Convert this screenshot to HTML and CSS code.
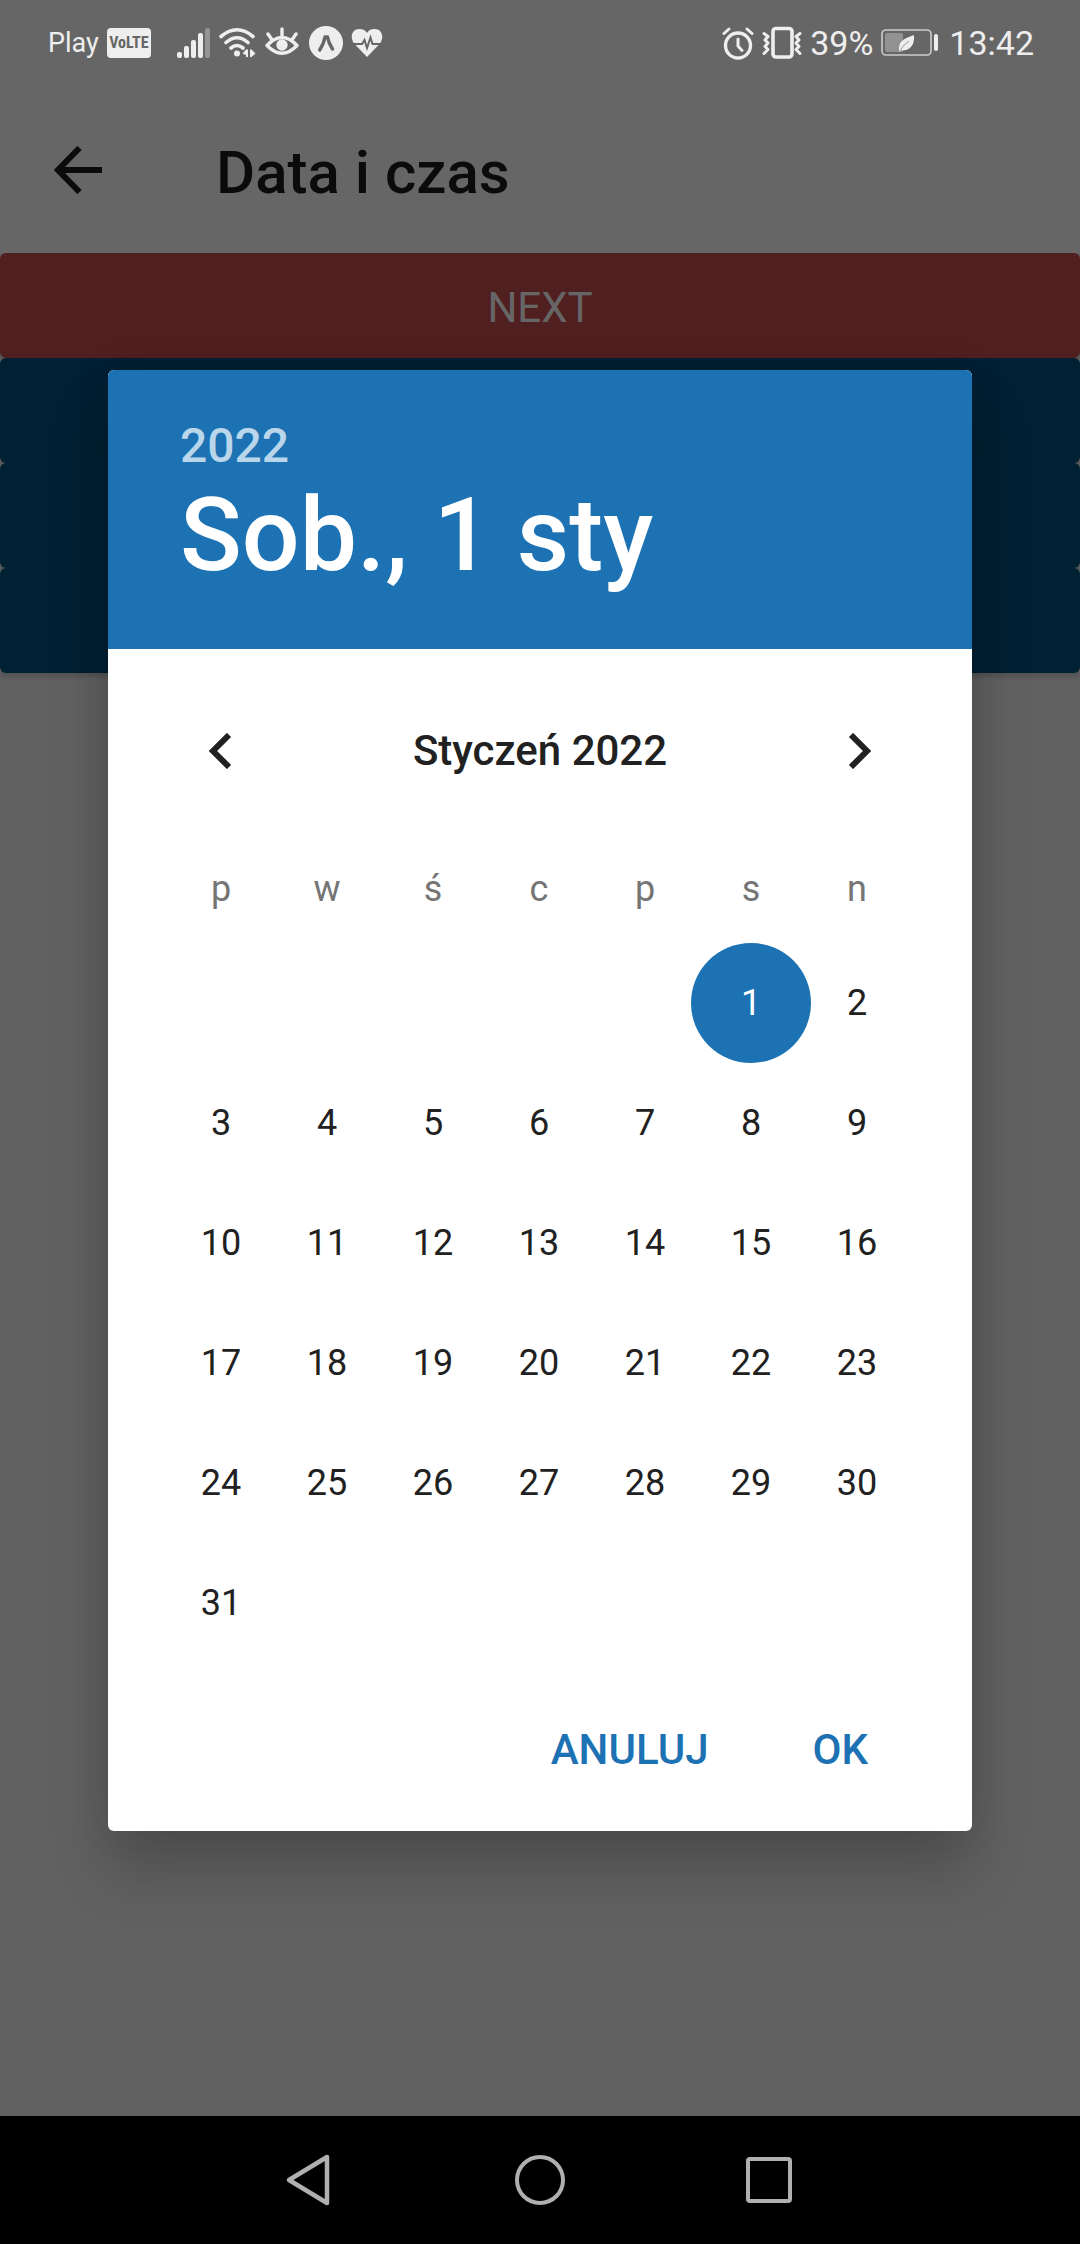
FILE: index.html
```html
<!DOCTYPE html>
<html lang="pl">
<head>
<meta charset="utf-8">
<meta name="viewport" content="width=device-width, initial-scale=1">
<title>Data i czas</title>
<link rel="stylesheet" href="styles.css">
</head>
<body>
<div class="screen">
  <div class="status-bar">
    <div class="status-group">
      <span class="carrier">Play</span>
      <span class="volte">VoLTE</span>
      <svg class="signal" width="34" height="32" viewBox="0 0 34 32" fill="#eee">
        <rect x="0" y="25" width="5" height="6" rx="2"/><rect x="7" y="19" width="5" height="12" rx="2"/><rect x="14" y="13" width="5" height="18" rx="2"/><rect x="21" y="6" width="5" height="25" rx="2"/><rect x="28" y="1" width="5" height="30" rx="2" opacity=".35"/>
      </svg>
      <svg width="38" height="34" viewBox="0 0 38 34" fill="none" stroke="#eee" stroke-width="3.600" stroke-linecap="round">
        <path d="M2 10.500Q18 -3 34 10.500M7 16.500Q18 7 29 16.500M12 22Q18 17 24 22"/>
        <circle cx="18" cy="27.500" r="3" fill="#eee" stroke="none"/>
        <path d="M29 23.500V31H27V29L23.500 27.800L27 23.500ZM31 23.500H32.500L36.500 27.500L32.500 31H31Z" fill="#eee" stroke="none"/>
      </svg>
      <svg width="34" height="34" viewBox="0 0 34 34" fill="none" stroke="#eee" stroke-width="3.400" stroke-linecap="round" stroke-linejoin="round">
        <path d="M2 19.500Q17 3.500 32 19.500Q17 35 2 19.500ZM17 10V3M6.500 13L3 8M27.500 13L31 8"/>
        <circle cx="17" cy="19" r="5.700" fill="#eee" stroke="none"/>
      </svg>
      <svg class="expo" width="34" height="34" viewBox="0 0 34 34">
        <circle cx="17" cy="17" r="17" fill="#eee"/>
        <path d="M10.700 24Q15 17 16 11H18.500Q19.500 17 23.500 23" fill="none" stroke="#666" stroke-width="3.400" stroke-linecap="round" stroke-linejoin="round"/>
      </svg>
      <svg width="32" height="30" viewBox="0 0 32 30">
        <path d="M16 29L3 15.500C-1.500 9 1 1 8.500 1C12 1 14.500 2.500 16 5C17.500 2.500 20 1 23.500 1C31 1 33.500 9 29 15.500Z" fill="#eee"/>
        <path d="M1 16H11L13.500 12L16 20L19.500 9.500L21.500 16H31" fill="none" stroke="#666" stroke-width="2"/>
      </svg>
    </div>
    <div class="status-group">
      <svg width="32" height="34" viewBox="0 0 32 34" fill="none" stroke="#eee" stroke-width="3.400" stroke-linecap="round" stroke-linejoin="round">
        <circle cx="16" cy="19.500" r="12.500"/><path d="M16 13V20L20 24.500M2 7.500L7 3M30 7.500L25 3" stroke-width="3"/>
      </svg>
      <svg width="40" height="34" viewBox="0 0 40 34" fill="none" stroke="#eee" stroke-width="3" stroke-linejoin="round" stroke-linecap="round">
        <rect x="11" y="2.500" width="19" height="28.500" rx="3" stroke-width="3.600"/>
        <path d="M2 7.500L6 10.500L3 14L6 17L3 20.500L6 23.500L2 27.500M38 7.500L34 10.500L37 14L34 17L37 20.500L34 23.500L38 27.500"/>
      </svg>
      <span class="status-text">39%</span>
      <svg width="58" height="30" viewBox="0 0 58 30">
        <rect x="1" y="2" width="49" height="25" rx="4" fill="none" stroke="#ccc" stroke-width="1.600"/>
        <rect x="4" y="5" width="18" height="19" rx="2" fill="#929292"/>
        <rect x="53" y="6" width="4" height="17" rx="2" fill="#eee"/>
        <path d="M18 24C17 13 22 11 33 7C34 17 29 23 20 22.500Z" fill="#eee"/><path d="M18.500 23Q23 16 28 13" stroke="#999" fill="none"/>
      </svg>
      <span class="status-text clock">13:42</span>
    </div>
  </div>

  <header class="app-bar">
    <button class="back" type="button" aria-label="Wstecz">
      <svg width="48" height="48" viewBox="0 0 48 48" fill="none" stroke="#1c1c1e" stroke-width="6"><path d="M48 24H6M25.500 2L4 24L25.500 46"/></svg>
    </button>
    <h1 class="title">Data i czas</h1>
  </header>

  <main class="content">
    <button class="bar bar-next" type="button">NEXT</button>
    <button class="bar" type="button" aria-label="Data"></button>
    <button class="bar" type="button" aria-label="Czas"></button>
    <button class="bar" type="button" aria-label="Data i czas"></button>
  </main>

  <div class="scrim">
    <section class="dialog" role="dialog" aria-modal="true" aria-label="Wybierz datę">
      <header class="dialog-head">
        <button class="year" type="button">2022</button>
        <h2 class="date">Sob., 1 sty</h2>
      </header>
      <div class="month">
        <button class="step" type="button" aria-label="Poprzedni miesiąc"><svg width="24" height="36" viewBox="0 0 24 36" fill="none" stroke="#212121" stroke-width="6"><path d="M20 2L4 18L20 34"/></svg></button>
        <h3 class="month-name">Styczeń 2022</h3>
        <button class="step" type="button" aria-label="Następny miesiąc"><svg width="24" height="36" viewBox="0 0 24 36" fill="none" stroke="#212121" stroke-width="6"><path d="M4 2L20 18L4 34"/></svg></button>
      </div>
      <table class="calendar">
        <thead><tr><th>p</th><th>w</th><th>ś</th><th>c</th><th>p</th><th>s</th><th>n</th></tr></thead>
        <tbody>
          <tr><td></td><td></td><td></td><td></td><td></td><td><button class="day selected" type="button" aria-pressed="true">1</button></td><td><button class="day" type="button">2</button></td></tr>
          <tr><td><button class="day" type="button">3</button></td><td><button class="day" type="button">4</button></td><td><button class="day" type="button">5</button></td><td><button class="day" type="button">6</button></td><td><button class="day" type="button">7</button></td><td><button class="day" type="button">8</button></td><td><button class="day" type="button">9</button></td></tr>
          <tr><td><button class="day" type="button">10</button></td><td><button class="day" type="button">11</button></td><td><button class="day" type="button">12</button></td><td><button class="day" type="button">13</button></td><td><button class="day" type="button">14</button></td><td><button class="day" type="button">15</button></td><td><button class="day" type="button">16</button></td></tr>
          <tr><td><button class="day" type="button">17</button></td><td><button class="day" type="button">18</button></td><td><button class="day" type="button">19</button></td><td><button class="day" type="button">20</button></td><td><button class="day" type="button">21</button></td><td><button class="day" type="button">22</button></td><td><button class="day" type="button">23</button></td></tr>
          <tr><td><button class="day" type="button">24</button></td><td><button class="day" type="button">25</button></td><td><button class="day" type="button">26</button></td><td><button class="day" type="button">27</button></td><td><button class="day" type="button">28</button></td><td><button class="day" type="button">29</button></td><td><button class="day" type="button">30</button></td></tr>
          <tr><td><button class="day" type="button">31</button></td><td></td><td></td><td></td><td></td><td></td><td></td></tr>
        </tbody>
      </table>
      <div class="actions">
        <button class="action" type="button">ANULUJ</button>
        <button class="action" type="button">OK</button>
      </div>
    </section>
  </div>

  <nav class="nav-bar">
    <button class="nav-key" type="button" aria-label="Wstecz"><svg width="52" height="60" viewBox="0 0 52 60" fill="none" stroke="#b0b0b0" stroke-width="4.500" stroke-linejoin="round"><path d="M42 7V53L4 30Z"/></svg></button>
    <button class="nav-key" type="button" aria-label="Ekran główny"><svg width="52" height="52" viewBox="0 0 52 52" fill="none" stroke="#b0b0b0" stroke-width="4"><circle cx="26" cy="26" r="23"/></svg></button>
    <button class="nav-key" type="button" aria-label="Ostatnie"><svg width="46" height="46" viewBox="0 0 46 46" fill="none" stroke="#b0b0b0" stroke-width="4"><rect x="2" y="2" width="42" height="42" rx="2"/></svg></button>
  </nav>
</div>
</body>
</html>
```
FILE: styles.css
```css
* { box-sizing: border-box; }

body {
  margin: 0;
  font-family: Roboto, "Noto Sans", sans-serif;
  background: #f2f2f2;
}

h1, h2, h3 { margin: 0; font-weight: 500; }

button {
  margin: 0;
  padding: 0;
  border: 0;
  background: none;
  font: inherit;
  color: inherit;
  cursor: pointer;
}

svg { display: block; flex: none; }

.screen {
  position: relative;
  display: flex;
  flex-direction: column;
  min-height: 100vh;
}

/* System status bar, drawn above the scrim */
.status-bar {
  display: flex;
  justify-content: space-between;
  align-items: center;
  height: 86px;
  padding: 0 46px 0 48px;
  background: #fff;
  color: #eee;
}

.status-group {
  position: relative;
  z-index: 2;
  display: flex;
  align-items: center;
  gap: 8px;
}

.carrier { font-size: 27px; line-height: 32px; }

.volte {
  width: 44px;
  border-radius: 4px;
  background: #eee;
  color: #666;
  font: 700 16px/30px "Roboto Condensed", "Liberation Sans Narrow", Roboto, sans-serif;
  text-align: center;
}

.signal { margin-left: 18px; }
.expo { margin-left: 2px; }
.status-text { font-size: 34px; line-height: 40px; }
.clock { margin-left: 2px; }

.app-bar {
  display: flex;
  align-items: center;
  gap: 114px;
  height: 167px;
  padding: 0 54px;
  background: #fff;
}

.title {
  padding-top: 6px;
  font-size: 60px;
  line-height: 72px;
  color: #1c1c1e;
}

.content {
  flex: 1;
  display: flex;
  flex-direction: column;
}

.bar {
  height: 105px;
  padding-top: 4px;
  border-radius: 6px;
  background: #005080;
  color: #fff;
  font-size: 42px;
  box-shadow: 0 4px 4px rgba(0, 0, 0, .15);
}

.bar-next { background: #c84e50; }

/* Date picker */
.scrim {
  position: absolute;
  inset: 0 0 128px;
  z-index: 1;
  display: flex;
  justify-content: center;
  align-items: center;
  padding-top: 84px;
  background: rgba(0, 0, 0, .6);
}

.dialog {
  width: 80%;
  border-radius: 6px;
  background: #fff;
  color: #212121;
  overflow: hidden;
  box-shadow: 0 40px 60px rgba(0, 0, 0, .2), 0 0 40px rgba(0, 0, 0, .08);
}

.dialog-head {
  padding: 48px 72px 52px;
  background: #1c72b3;
  color: #fff;
}

.year {
  display: block;
  font-size: 48px;
  font-weight: 500;
  line-height: 56px;
  color: #b9d6ea;
}

.date { font-size: 102px; line-height: 123px; }

.month {
  display: flex;
  justify-content: space-between;
  align-items: center;
  height: 204px;
  padding: 0 60px;
}

.step {
  display: flex;
  justify-content: center;
  align-items: center;
  width: 106px;
  height: 120px;
}

.month-name { font-size: 42px; line-height: 48px; }

.calendar {
  width: calc(100% - 122px);
  margin: 0 60px;
  border-collapse: collapse;
  table-layout: fixed;
  font-size: 36px;
  line-height: 42px;
}

.calendar th, .calendar td { padding: 0; text-align: center; }

.calendar th {
  height: 90px;
  padding-bottom: 18px;
  font-weight: 400;
  color: #757575;
}

.calendar td { height: 120px; }

.day {
  width: 120px;
  height: 120px;
  margin: 0 -7px;
  border-radius: 50%;
}

.selected { background: #1c72b3; color: #fff; }

.actions {
  display: flex;
  justify-content: flex-end;
  gap: 8px;
  padding: 15px 56px 9px;
}

.action {
  min-width: 100px;
  height: 144px;
  padding: 0 48px;
  color: #1c72b3;
  font-size: 42px;
  font-weight: 500;
}

.nav-bar {
  display: flex;
  justify-content: center;
  align-items: center;
  gap: 109px;
  height: 128px;
  background: #000;
}

.nav-key {
  display: flex;
  justify-content: center;
  align-items: center;
  width: 120px;
  height: 120px;
}
```
